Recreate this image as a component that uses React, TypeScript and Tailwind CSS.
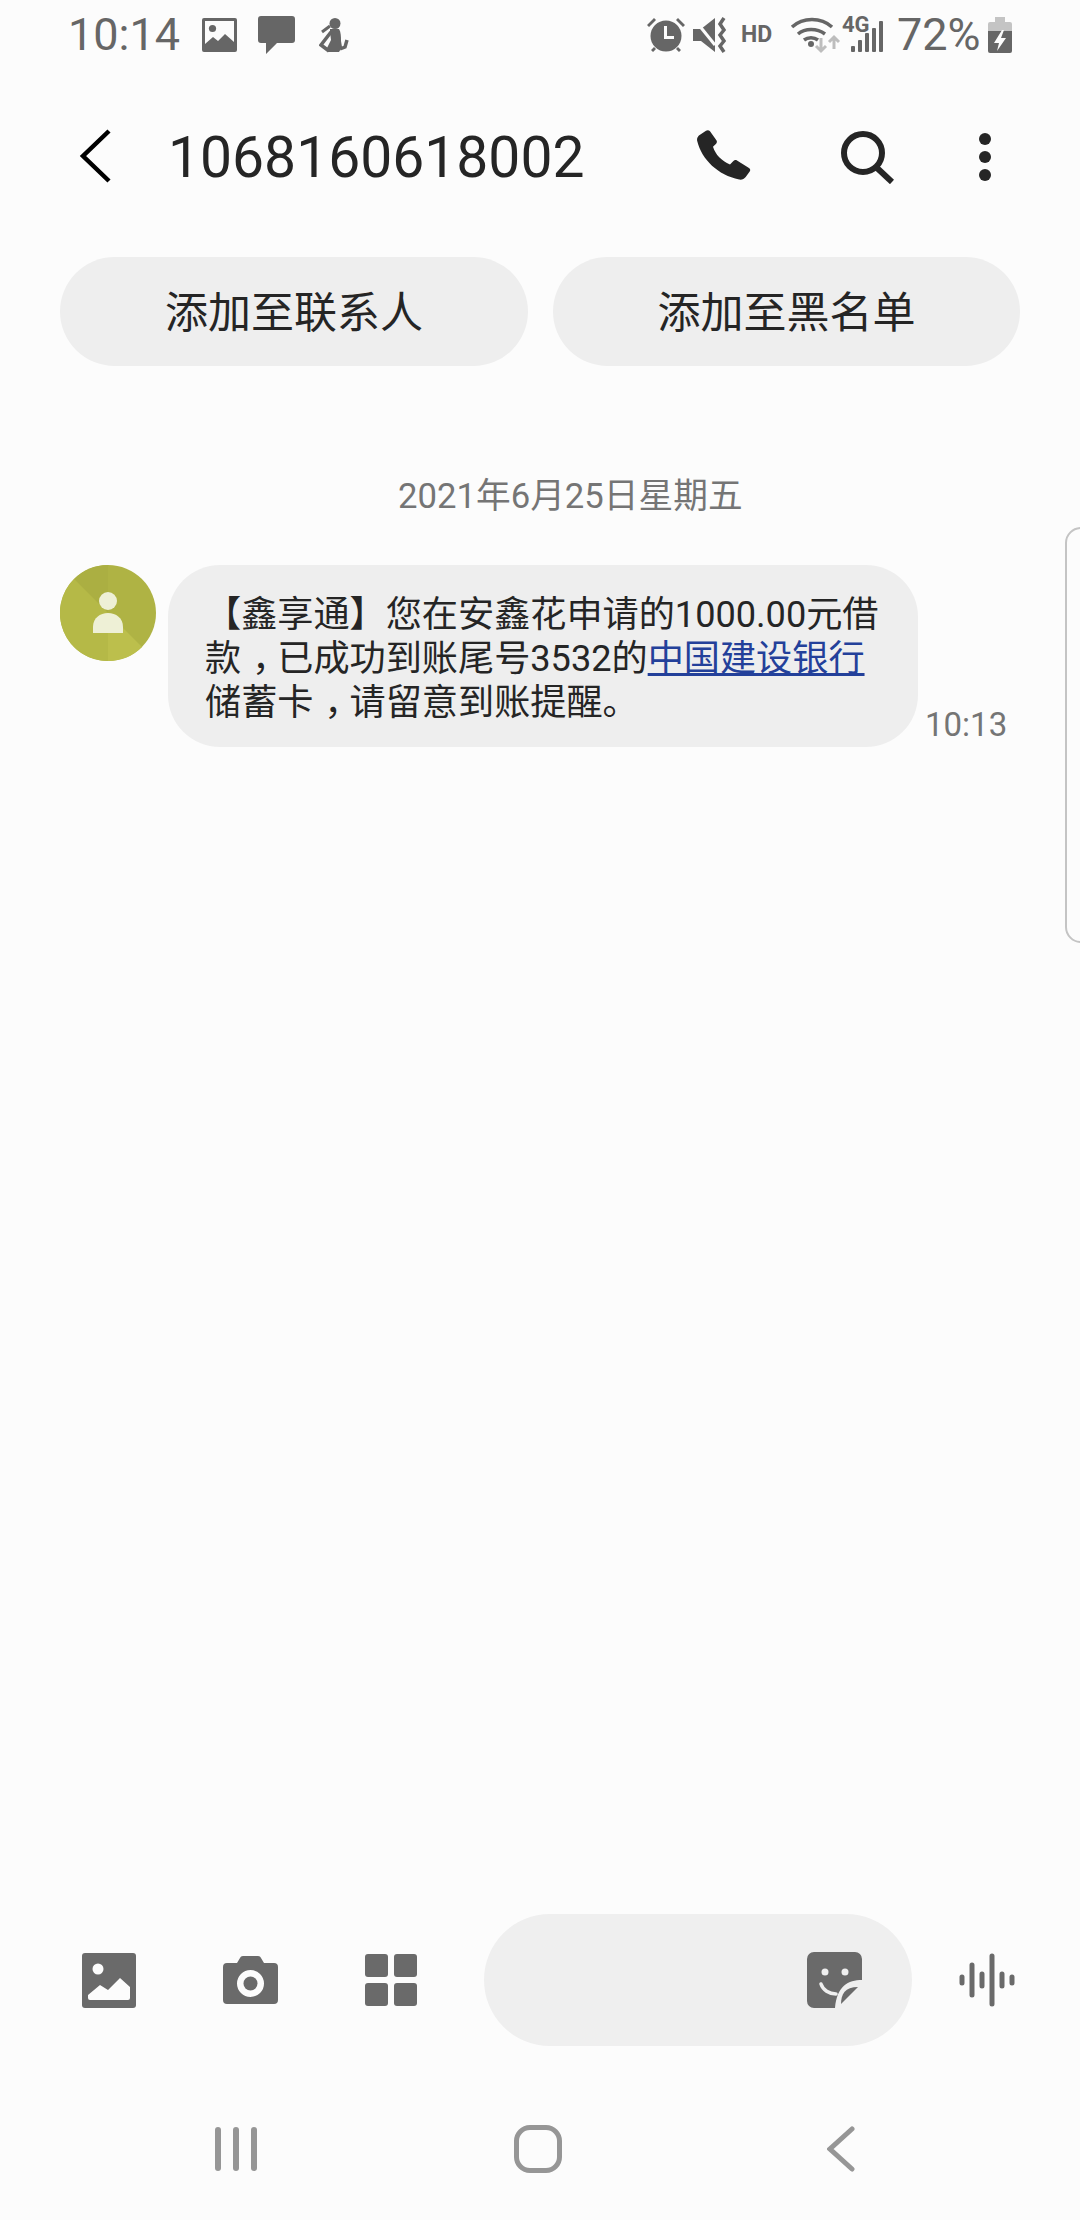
const cjk = "font-['Roboto','Noto_Sans_CJK_SC',sans-serif]";

const StatusLeft = () => (
  <div className="flex items-center">
    <span className="ml-[68px] w-[134px] text-[45px] leading-[52px] text-[#666666]">10:14</span>
    <svg width="35" height="34" viewBox="0 0 35 34" fill="#666666">
      <path fillRule="evenodd" d="M2 0h31a2 2 0 0 1 2 2v30a2 2 0 0 1-2 2H2a2 2 0 0 1-2-2V2a2 2 0 0 1 2-2Zm1 3v23l8-7 5 4 7-7 9 8V3H3Z" />
      <circle cx="10.5" cy="10.5" r="3.6" />
    </svg>
    <svg className="ml-[21px]" width="37" height="38" viewBox="0 0 37 38" fill="#666666">
      <path d="M3 0h31a3 3 0 0 1 3 3v21a3 3 0 0 1-3 3H19l-11 11V27H3a3 3 0 0 1-3-3V3a3 3 0 0 1 3-3Z" />
    </svg>
    <svg className="ml-[24px]" width="30" height="35" viewBox="0 0 30 35" fill="#666666">
      <circle cx="16" cy="5.500" r="5.500" />
      <path d="M11 8L3 14" fill="none" stroke="#666666" strokeWidth="3" />
      <path d="M11 11h9c2 3 2 8 2 12l1 6-3 5H9l-1-4 4-8-1-8Z" />
      <path d="M12 14L2 27l8 6M21 31l5-2 2-7" fill="none" stroke="#666666" strokeWidth="3.500" />
    </svg>
  </div>
);

const StatusRight = () => (
  <div className="flex items-center">
    <svg width="38" height="36" viewBox="0 0 38 36" fill="#666666">
      <circle cx="19" cy="19" r="15.500" />
      <path d="M0 8l7-7 2 2-7 7ZM38 8l-7-7-2 2 7 7ZM4 33l3-3 2 2-3 3ZM34 33l-3-3-2 2 3 3Z" />
      <path d="M17 9h3v10h7v3H17Z" fill="#fcfcfc" />
    </svg>
    <svg className="ml-[8px]" width="36" height="36" viewBox="0 0 36 36" fill="#666666">
      <path d="M0 12h8L22 1v34L8 24H0Z" />
      <path d="M1 2l21 26" stroke="#fcfcfc" strokeWidth="3" />
      <path d="M31 1l-4 6 4 6-4 5 4 6-4 5 4 6" fill="none" stroke="#666666" strokeWidth="3.500" />
    </svg>
    <span className="ml-[12px] w-[50px] text-[23px] font-bold leading-[24px] text-[#666666]">HD</span>
    <svg className="overflow-visible" width="42" height="36" viewBox="0 0 42 36" fill="none" stroke="#666666" strokeWidth="3.500">
      <path d="M1 10c11-10 29-10 40 0M7 17c7-6 19-6 27 0M13 23c4-3 10-3 14 0" />
      <circle cx="20" cy="27" r="3" fill="#666666" stroke="none" />
      <path d="M30 21v13M25 29l5 5 5-5" stroke="#bdbdbd" strokeWidth="3" />
      <path d="M43 32V21M38 25l5-5 5 5" stroke="#bdbdbd" strokeWidth="3" />
    </svg>
    <div className="relative ml-[9px] h-[36px] w-[41px]">
      <span className="absolute left-0 top-[-3px] text-[22px] font-bold leading-[22px] text-[#666666]">4G</span>
      <svg className="absolute left-[9px] top-[3px]" width="32" height="32" viewBox="0 0 32 32" fill="#666666">
        <rect x="0" y="26" width="4" height="6" rx="1" />
        <rect x="7" y="20" width="4" height="12" rx="1" />
        <rect x="14" y="13" width="4" height="19" rx="1" />
        <rect x="21" y="8" width="4" height="24" rx="1" />
        <rect x="28" y="1" width="4" height="31" rx="1" />
      </svg>
    </div>
    <span className="ml-[14px] w-[91px] text-[45px] leading-[52px] text-[#666666]">72%</span>
    <svg width="24" height="36" viewBox="0 0 24 36" fill="#666666">
      <path d="M7 0h10v5h5a2 2 0 0 1 2 2v7H0V7a2 2 0 0 1 2-2h5Z" fill="#c4c4c4" />
      <path d="M0 14h24v20a2 2 0 0 1-2 2H2a2 2 0 0 1-2-2Z" />
      <path d="M14 13l-8 13h5l-2 8 9-13h-5l3-8Z" fill="#fcfcfc" />
    </svg>
  </div>
);

const Header = () => (
  <div className="flex h-[114px] items-center">
    <svg className="ml-[79px] shrink-0" width="33" height="54" viewBox="0 0 33 54" fill="none" stroke="#000000" strokeWidth="4.500">
      <path d="M30 2L4 27l26 25" />
    </svg>
    <span className="ml-[56px] w-[529px] pt-[3px] text-[57px] leading-[66px] text-[#252525]">1068160618002</span>
    <svg className="mt-[2px] shrink-0" width="54" height="54" viewBox="0 0 54 54" fill="#252525">
      <path d="M9 .8c1.300-1 3-.8 4 .4l6.400 9c.8 1.100.6 2.600-.3 3.600l-3.100 3c2.500 8 8.500 14 17 17.600l3.400-3.500c1-1 2.500-1.100 3.600-.4l12 7.400c1.300.8 1.600 2.500.7 3.700l-4 5.400c-1.500 2-4 3-6.500 2.500C21 45 5 30 .2 11c-.5-2 .2-4 1.700-5.400Z" />
    </svg>
    <svg className="ml-[90px] mt-[2px] shrink-0" width="53" height="53" viewBox="0 0 53 53" fill="none" stroke="#252525" strokeWidth="6">
      <circle cx="22" cy="22" r="19" />
      <path d="M35 36l16 15" />
    </svg>
    <div className="ml-[85px] mt-[2px] flex shrink-0 flex-col gap-[6px]">
      <div className="h-[12px] w-[12px] rounded-full bg-[#252525]"></div>
      <div className="h-[12px] w-[12px] rounded-full bg-[#252525]"></div>
      <div className="h-[12px] w-[12px] rounded-full bg-[#252525]"></div>
    </div>
  </div>
);

const Avatar = () => (
  <svg className="shrink-0" width="96" height="96" viewBox="0 0 96 96">
    <circle cx="48" cy="48" r="48" fill="#afb344" />
    <path d="M48 0a48 48 0 0 0-34 14l34 34Z" fill="#abaf42" />
    <path d="M14 14a48 48 0 0 0 34 82V48Z" fill="#b5b947" />
    <path d="M48 48v48a48 48 0 0 0 34-14Z" fill="#bcbf4c" />
    <circle cx="48" cy="36" r="9" fill="#eef0d6" />
    <path d="M33 68v-6c0-9 7-14 15-14s15 5 15 14v6Z" fill="#eef0d6" />
  </svg>
);

const InputBar = () => (
  <div className="flex h-[132px] items-center">
    <svg className="ml-[82px] shrink-0" width="54" height="55" viewBox="0 0 54 55" fill="#6a6a6a">
      <path d="M3 0h48a3 3 0 0 1 3 3v49a3 3 0 0 1-3 3H3a3 3 0 0 1-3-3V3a3 3 0 0 1 3-3Z" />
      <path d="M6 42l12-10 8 5 12-12 10 9v11a2 2 0 0 1-2 2H8a2 2 0 0 1-2-2Z" fill="#fcfcfc" />
      <circle cx="16" cy="16" r="5.500" fill="#fcfcfc" />
    </svg>
    <svg className="ml-[87px] shrink-0" width="55" height="48" viewBox="0 0 55 48" fill="#6a6a6a">
      <path fillRule="evenodd" d="M17 2c.5-1.200 1.500-2 3-2h15c1.500 0 2.500.8 3 2l3 5h10a4 4 0 0 1 4 4v33a4 4 0 0 1-4 4H4a4 4 0 0 1-4-4V11a4 4 0 0 1 4-4h10Zm10.500 12a13.500 13.500 0 1 0 0 27 13.500 13.500 0 0 0 0-27Z" />
      <circle cx="27.500" cy="27.500" r="7" />
    </svg>
    <div className="ml-[87px] grid shrink-0 grid-cols-[23px_23px] gap-[6px]">
      <div className="h-[23px] rounded-[3px] bg-[#6a6a6a]"></div>
      <div className="h-[23px] rounded-[3px] bg-[#6a6a6a]"></div>
      <div className="h-[23px] rounded-[3px] bg-[#6a6a6a]"></div>
      <div className="h-[23px] rounded-[3px] bg-[#6a6a6a]"></div>
    </div>
    <div className="ml-[67px] flex h-[132px] w-[428px] shrink-0 items-center justify-end rounded-full bg-[#efefef] pr-[50px]">
      <svg width="55" height="56" viewBox="0 0 55 56" fill="#6a6a6a">
        <path d="M7 0h41a7 7 0 0 1 7 7v21c-14 0-25 6-27 28H7a7 7 0 0 1-7-7V7a7 7 0 0 1 7-7Z" />
        <path d="M51 35L34 52c0-10 4-17 17-17Z" />
        <circle cx="18" cy="20" r="3.500" fill="#efefef" />
        <circle cx="38" cy="20" r="3.500" fill="#efefef" />
        <path d="M14 32c2 6 8 10 15 10" fill="none" stroke="#efefef" strokeWidth="3.500" strokeLinecap="round" />
      </svg>
    </div>
    <svg className="ml-[47px] shrink-0" width="56" height="54" viewBox="0 0 56 54" fill="none" stroke="#6a6a6a" strokeWidth="5" strokeLinecap="round">
      <path d="M3 24v6M13 12v30M23 21v12M33 3v48M43 21v12M53 24v6" />
    </svg>
  </div>
);

const NavBar = () => (
  <div className="flex h-[48px] items-center">
    <div className="ml-[215px] flex shrink-0 gap-[12px]">
      <div className="h-[44px] w-[6px] rounded-full bg-[#969696]"></div>
      <div className="h-[44px] w-[6px] rounded-full bg-[#969696]"></div>
      <div className="h-[44px] w-[6px] rounded-full bg-[#969696]"></div>
    </div>
    <div className="ml-[257px] h-[48px] w-[48px] shrink-0 rounded-[16px] border-[5px] border-[#969696]"></div>
    <svg className="ml-[265px] shrink-0" width="28" height="46" viewBox="0 0 28 46" fill="none" stroke="#969696" strokeWidth="5" strokeLinecap="round">
      <path d="M25 3L3 23l22 20" />
    </svg>
  </div>
);

export default function App() {
  return (
    <div className={`relative h-[2220px] w-[1080px] overflow-hidden bg-[#fcfcfc] ${cjk}`}>
      <div className="box-content flex h-[52px] items-center justify-between pr-[68px] pt-[9px]">
        <StatusLeft />
        <StatusRight />
      </div>
      <div className="mt-[38px]">
        <Header />
      </div>

      <div className="mt-[44px] flex gap-[25px] pl-[60px]">
        <div className="flex h-[109px] w-[468px] items-center justify-center rounded-[55px] bg-[#eeeeee] pt-[3px] text-[43px] text-[#252525]">添加至联系人</div>
        <div className="flex h-[109px] w-[467px] items-center justify-center rounded-[55px] bg-[#eeeeee] pt-[3px] text-[43px] text-[#252525]">添加至黑名单</div>
      </div>

      <div className="mt-[107px] pl-[398px] text-[34.7px] leading-[46px] text-[#757575]">2021年6月25日星期五</div>

      <div className="mt-[46px] flex items-start pl-[60px]">
        <Avatar />
        <div className="ml-[12px] h-[182px] w-[750px] shrink-0 rounded-[52px] bg-[#eeeeee] pl-[37px] pt-[28px] text-[36.15px] leading-[44px] text-[#252525]">
          <div className="whitespace-nowrap">【鑫享通】您在安鑫花申请的1000.00元借</div>
          <div className="whitespace-nowrap">
            款<span className="inline-block w-[1em] pl-[0.3em] [font-feature-settings:'halt']">，</span>已成功到账尾号3532的<span className="text-[#23409a] underline">中国建设银行</span>
          </div>
          <div className="whitespace-nowrap">
            储蓄卡<span className="inline-block w-[1em] pl-[0.3em] [font-feature-settings:'halt']">，</span>请留意到账提醒。
          </div>
        </div>
        <span className="ml-[7px] mt-[138px] text-[33px] leading-[44px] text-[#757575]">10:13</span>
      </div>

      <div className="mt-[1167px]">
        <InputBar />
      </div>
      <div className="mt-[79px]">
        <NavBar />
      </div>

      <div className="absolute left-[1065px] top-[527px] h-[416px] w-[30px] rounded-l-[16px] border-2 border-[#c4c4c4]"></div>
    </div>
  );
}
